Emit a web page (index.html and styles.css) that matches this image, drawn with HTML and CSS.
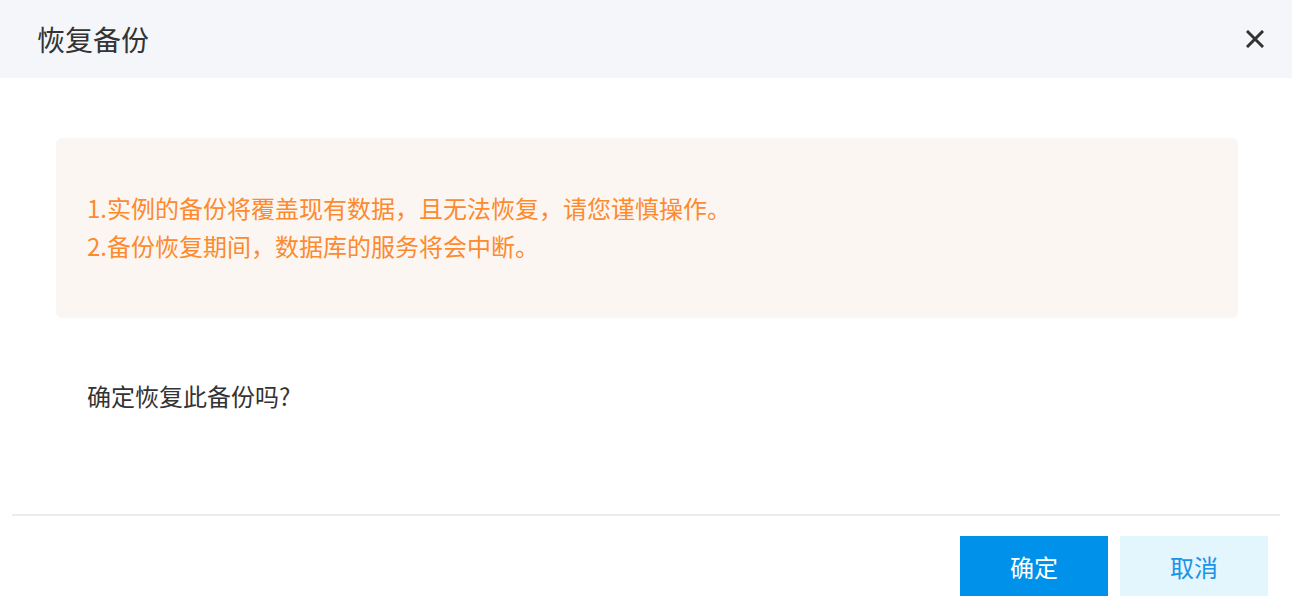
FILE: index.html
```html
<!DOCTYPE html>
<html lang="zh-CN">
<head>
    <meta charset="UTF-8">
    <meta name="viewport" content="width=device-width, initial-scale=1.0">
    <title>恢复备份</title>
    <link rel="stylesheet" href="styles.css">
</head>
<body>
    <div class="dialog">
        <div class="dialog-header">
            <h2 class="dialog-title">恢复备份</h2>
            <button class="dialog-close" aria-label="关闭">
                <svg width="18" height="18" viewBox="0 0 18 18">
                    <path d="M2 2 L16 16 M16 2 L2 16" stroke="#333" stroke-width="3" stroke-linecap="square" fill="none"/>
                </svg>
            </button>
        </div>

        <div class="dialog-body">
            <div class="notice">
                <p>1.实例的备份将覆盖现有数据，且无法恢复，请您谨慎操作。</p>
                <p>2.备份恢复期间，数据库的服务将会中断。</p>
            </div>
            <p class="confirm-text">确定恢复此备份吗?</p>
        </div>

        <div class="dialog-footer">
            <button class="btn btn-primary">确定</button>
            <button class="btn btn-default">取消</button>
        </div>
    </div>
</body>
</html>
```

FILE: styles.css
```css
body {
    margin: 0;
    background: #fff;
    font-family: "Noto Sans CJK SC", "Noto Sans", sans-serif;
    color: #333;
}
p {
    margin: 0;
}
.dialog {
    width: 100%;
}
.dialog-header {
    height: 78px;
    display: flex;
    align-items: center;
    justify-content: space-between;
    padding: 0 28px 0 37px;
    background-color: #f5f6fa;
}
.dialog-title {
    margin: 0;
    font-size: 28px;
    font-weight: 400;
    color: #333;
}
.dialog-close {
    display: flex;
    border: none;
    background: none;
    padding: 0;
    cursor: pointer;
}
.dialog-body {
    padding: 60px 54px 100px 56px;
}
.notice {
    padding: 51px 31px 53px;
    background-color: #fbf6f1; /* light warm warning background */
    border-radius: 6px;
    color: #fd8a2f;
    font-size: 24px;
    line-height: 38px;
}
.confirm-text {
    margin-top: 60px;
    padding-left: 31px;
    font-size: 24px;
    line-height: 36px;
    color: #333;
}
.dialog-footer {
    margin: 0 12px;
    border-top: 2px solid #ececec;
    padding: 20px 12px 0 0;
    display: flex;
    justify-content: flex-end;
    gap: 12px;
}
.btn {
    width: 148px;
    height: 60px;
    border: none;
    font-family: inherit;
    font-size: 24px;
    cursor: pointer;
}
.btn-primary {
    background-color: #0092ea;
    color: #fff;
}
.btn-default {
    background-color: #e3f5fd;
    color: #1a93e8;
}
```
